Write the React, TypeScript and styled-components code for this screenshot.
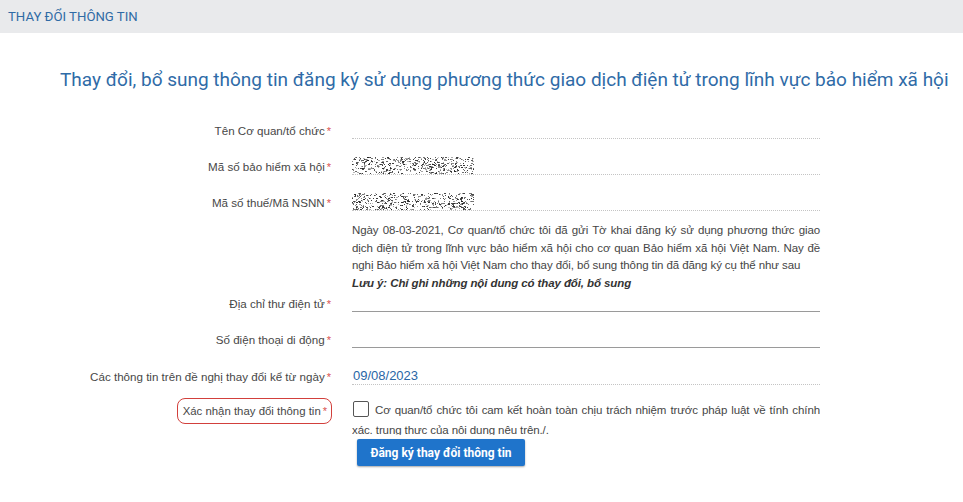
import React from "react";
import styled, { createGlobalStyle } from "styled-components";

const Global = createGlobalStyle`
  html, body { margin: 0; padding: 0; background: #fff; }
  body { font-family: "Liberation Sans", Arial, sans-serif; }
  * { box-sizing: border-box; }
`;

const Page = styled.div`
  width: 963px;
  height: 502px;
  overflow: hidden;
  background: #fff;
`;

const Header = styled.div`
  height: 33px;
  background: #e9eaec;
  display: flex;
  align-items: center;
  padding-left: 8px;
  font-family: Roboto, "Liberation Sans", sans-serif;
  font-size: 13.2px;
  color: #2f6aa5;
`;

const Title = styled.h1`
  margin: 35px 0 0 60px;
  font-family: Roboto, "Liberation Sans", sans-serif;
  font-weight: 400;
  font-size: 19px;
  line-height: 24px;
  color: #2f6ba7;
  white-space: nowrap;
`;

const Form = styled.div`
  margin-top: 27px;
  display: flex;
  flex-direction: column;
`;

const Row = styled.div<{ $mt?: number; $align?: string }>`
  display: grid;
  grid-template-columns: 331px 468px;
  column-gap: 21px;
  align-items: ${(p) => p.$align || "end"};
  margin-top: ${(p) => p.$mt ?? 0}px;
`;

const Label = styled.div`
  text-align: right;
  font-size: 11.6px;
  line-height: 16px;
  color: #474747;
  white-space: nowrap;
`;

const Star = styled.span`
  color: #d9534f;
  margin-left: 2px;
  font-size: 11px;
`;

const Field = styled.div<{ $line?: "dotted" | "solid" }>`
  height: 20px;
  display: flex;
  align-items: flex-end;
  border-bottom: 1px ${(p) => p.$line || "dotted"} ${(p) => (p.$line === "solid" ? "#9a9a9a" : "#c4c4c4")};
`;

const Faint = styled.span`
  font-size: 12px;
  line-height: 16px;
  color: #f0f0f0;
  padding-left: 4px;
`;

const DateValue = styled.span`
  font-size: 13px;
  line-height: 17px;
  color: #2966a6;
  padding-left: 1px;
`;

const Notice = styled.div`
  grid-column: 2;
  margin-top: 11px;
  font-size: 11.5px;
  letter-spacing: -0.1px;
  line-height: 17.5px;
  color: #454545;
`;

const Justified = styled.p`
  margin: 0;
  text-align: justify;
`;

const Note = styled.p`
  margin: 0;
  font-weight: 700;
  font-style: italic;
  color: #333;
`;

const ConfirmLabel = styled.div`
  justify-self: end;
  margin-right: -1px;
  height: 26px;
  display: flex;
  align-items: center;
  padding: 0 4px 0 5px;
  border: 1.5px solid #d2403c;
  border-radius: 8px;
  font-size: 11.4px;
  color: #474747;
  white-space: nowrap;
`;

const ConfirmField = styled.div`
  display: flex;
  flex-direction: column;
  align-items: flex-start;
`;

const ConfirmText = styled.p`
  margin: 2px 0 0;
  width: 468px;
  height: 35px;
  overflow: hidden;
  font-size: 11.5px;
  letter-spacing: -0.1px;
  line-height: 20px;
  color: #454545;
  text-align: justify;
`;

const Box = styled.span`
  display: inline-block;
  width: 16px;
  height: 16px;
  border: 1.5px solid #555;
  border-radius: 2px;
  vertical-align: -3px;
  margin: 0 6px 0 1px;
  background: #fff;
`;

const Submit = styled.button`
  margin: 4px 0 0 5px;
  width: 168px;
  height: 27px;
  border: none;
  border-radius: 2px;
  background: #1f74cb;
  box-shadow: 0 1px 2px rgba(0, 0, 0, 0.35);
  color: #fff;
  font-family: Roboto, "Liberation Sans", sans-serif;
  font-weight: 700;
  font-size: 12px;
  padding: 0;
`;

function Noise({ seed, width = 122, height = 17 }: { seed: number; width?: number; height?: number }) {
  let s = seed;
  const rnd = () => {
    s = (s * 1103515245 + 12345) % 2147483648;
    return s / 2147483648;
  };
  const dots: React.ReactElement[] = [];
  for (let i = 0; i < 520; i++) {
    const x = Math.floor(rnd() * width);
    const y = Math.floor(rnd() * height);
    const w = rnd() > 0.7 ? 2 : 1;
    const o = 0.25 + rnd() * 0.7;
    dots.push(<rect key={i} x={x} y={y} width={w} height={1} fill="#222" opacity={o} />);
  }
  return (
    <svg width={width} height={height} style={{ display: "block" }}>
      {dots}
    </svg>
  );
}

export default function App() {
  return (
    <Page>
      <Global />
      <Header>THAY ĐỔI THÔNG TIN</Header>
      <Title>
        Thay đổi, bổ sung thông tin đăng ký sử dụng phương thức giao dịch điện tử trong lĩnh vực bảo hiểm xã hội
      </Title>
      <Form>
        <Row>
          <Label>
            Tên Cơ quan/tổ chức<Star>*</Star>
          </Label>
          <Field>
            <Faint>&nbsp;</Faint>
          </Field>
        </Row>
        <Row $mt={16}>
          <Label>
            Mã số bảo hiểm xã hội<Star>*</Star>
          </Label>
          <Field>
            <Noise seed={7} />
          </Field>
        </Row>
        <Row $mt={16}>
          <Label>
            Mã số thuế/Mã NSNN<Star>*</Star>
          </Label>
          <Field>
            <Noise seed={91} />
          </Field>
        </Row>
        <Row>
          <Notice>
            <Justified>
              Ngày 08-03-2021, Cơ quan/tổ chức tôi đã gửi Tờ khai đăng ký sử dụng phương thức giao dịch điện tử
              trong lĩnh vực bảo hiểm xã hội cho cơ quan Bảo hiểm xã hội Việt Nam. Nay đề nghị Bảo hiểm xã hội Việt
              Nam cho thay đổi, bổ sung thông tin đã đăng ký cụ thể như sau
            </Justified>
            <Note>Lưu ý: Chỉ ghi những nội dung có thay đổi, bổ sung</Note>
          </Notice>
        </Row>
        <Row>
          <Label>
            Địa chỉ thư điện tử<Star>*</Star>
          </Label>
          <Field $line="solid" />
        </Row>
        <Row $mt={16}>
          <Label>
            Số điện thoại di động<Star>*</Star>
          </Label>
          <Field $line="solid" />
        </Row>
        <Row $mt={17}>
          <Label>
            Các thông tin trên đề nghị thay đổi kể từ ngày<Star>*</Star>
          </Label>
          <Field>
            <DateValue>09/08/2023</DateValue>
          </Field>
        </Row>
        <Row $mt={13} $align="start">
          <ConfirmLabel>
            Xác nhận thay đổi thông tin<Star>*</Star>
          </ConfirmLabel>
          <ConfirmField>
            <ConfirmText>
              <Box />
              Cơ quan/tổ chức tôi cam kết hoàn toàn chịu trách nhiệm trước pháp luật về tính chính xác. trung thực
              của nội dung nêu trên./.
            </ConfirmText>
            <Submit type="button">Đăng ký thay đổi thông tin</Submit>
          </ConfirmField>
        </Row>
      </Form>
    </Page>
  );
}
